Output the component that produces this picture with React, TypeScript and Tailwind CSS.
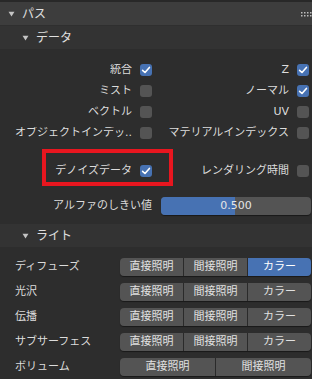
import React from "react";

function Check({ on }: { on?: boolean }) {
  return (
    <div
      className={`w-[12px] h-[12px] shrink-0 rounded-[3px] flex items-center justify-center ${
        on ? "bg-[#4772b3]" : "bg-[#545454]"
      }`}
    >
      {on && (
        <svg width="10" height="10" viewBox="0 0 10 10">
          <path
            d="M1.6 5.3 L4 7.5 L8.4 2.4"
            stroke="#ffffff"
            strokeWidth="1.6"
            fill="none"
            strokeLinecap="round"
            strokeLinejoin="round"
          />
        </svg>
      )}
    </div>
  );
}

function Tri() {
  return (
    <svg width="7" height="6" viewBox="0 0 7 6" className="shrink-0">
      <path d="M0.5 0.8 L6.5 0.8 L3.5 5.5 Z" fill="#c4c4c4" />
    </svg>
  );
}

function Row({
  l,
  lon,
  r,
  ron,
}: {
  l: string;
  lon?: boolean;
  r: string;
  ron?: boolean;
}) {
  return (
    <div className="flex h-[21px] items-center">
      <div className="w-[156px] flex justify-end items-center gap-[8px] pr-[4px] pl-[12px] min-w-0">
        <span className="whitespace-nowrap overflow-hidden">{l}</span>
        <Check on={lon} />
      </div>
      <div className="flex-1 flex justify-end items-center gap-[8px] pr-[3px]">
        <span className="whitespace-nowrap">{r}</span>
        <Check on={ron} />
      </div>
    </div>
  );
}

function LightRow({ label, sel, two }: { label: string; sel?: boolean; two?: boolean }) {
  const items = two ? ["直接照明", "間接照明"] : ["直接照明", "間接照明", "カラー"];
  return (
    <div className="flex h-[25px] items-center pl-[15px]">
      <span className="w-[105px] whitespace-nowrap">{label}</span>
      <div className="flex w-[191px] h-[18px] gap-[1px] rounded-[4px] overflow-hidden shadow-[0_1px_1px_rgba(0,0,0,0.45)] bg-[#2a2a2a]">
        {items.map((t, i) => (
          <div
            key={t}
            className={`flex-1 flex items-center justify-center ${
              sel && i === 2 ? "bg-[#4772b3] text-white" : "bg-[#545454] text-[#e0e0e0]"
            }`}
          >
            {t}
          </div>
        ))}
      </div>
    </div>
  );
}

export default function App() {
  return (
    <div className="w-[312px] h-[379px] overflow-hidden bg-[#2d2d2d] text-[11px] leading-none text-[#dcdcdc] font-['DejaVu_Sans','Noto_Sans_CJK_JP',sans-serif]">
      <div className="h-[2px] bg-[#282828]" />
      <div className="h-[23px] bg-[#3d3d3d] flex items-center pl-[8px] relative">
        <Tri />
        <span className="ml-[7px] text-[12px] text-[#e0e0e0]">パス</span>
        <svg width="11" height="5" viewBox="0 0 11 5" className="absolute right-[0px] top-[10px]">
          {[0, 3, 6, 9].map((x) =>
            [0, 3].map((y) => (
              <rect key={`${x}-${y}`} x={x} y={y} width="1.5" height="1.5" fill="#bdbdbd" />
            ))
          )}
        </svg>
      </div>
      <div className="h-[24px] bg-[#333333] flex items-center pl-[22px] border-t border-[#2f2f2f]">
        <Tri />
        <span className="ml-[7px] text-[12px] text-[#e0e0e0]">データ</span>
      </div>
      <div className="pt-[10px]">
        <Row l="統合" lon r="Z" ron />
        <Row l="ミスト" r="ノーマル" ron />
        <Row l="ベクトル" r="UV" />
        <Row l="オブジェクトインデッ.." r="マテリアルインデックス" />
        <div className="h-[17px]" />
        <div className="flex h-[21px] items-center relative">
          <div className="w-[156px] flex justify-end items-center gap-[8px] pr-[4px]">
            <span>デノイズデータ</span>
            <Check on />
          </div>
          <div className="flex-1 flex justify-end items-center gap-[8px] pr-[3px]">
            <span>レンダリング時間</span>
            <Check />
          </div>
          <div className="absolute left-[42px] top-[-11px] w-[131px] h-[37px] border-[4px] border-[#e8161f]" />
        </div>
        <div className="h-[14px]" />
        <div className="flex h-[21px] items-center">
          <div className="w-[156px] flex justify-end pr-[4px]">
            <span>アルファのしきい値</span>
          </div>
          <div className="ml-[5px] w-[150px] h-[18px] rounded-[4px] bg-[#545454] relative overflow-hidden flex items-center justify-center shadow-[0_1px_1px_rgba(0,0,0,0.45)]">
            <div className="absolute left-0 top-0 bottom-0 w-[74px] bg-[#4772b3]" />
            <span className="relative text-[#e6e6e6]">0.500</span>
          </div>
        </div>
      </div>
      <div className="h-[8px]" />
      <div className="h-[23px] bg-[#333333] flex items-center pl-[22px]">
        <Tri />
        <span className="ml-[7px] text-[12px] text-[#e0e0e0]">ライト</span>
      </div>
      <div className="pt-[7px]">
        <LightRow label="ディフューズ" sel />
        <LightRow label="光沢" />
        <LightRow label="伝播" />
        <LightRow label="サブサーフェス" />
        <LightRow label="ボリューム" two />
      </div>
    </div>
  );
}
